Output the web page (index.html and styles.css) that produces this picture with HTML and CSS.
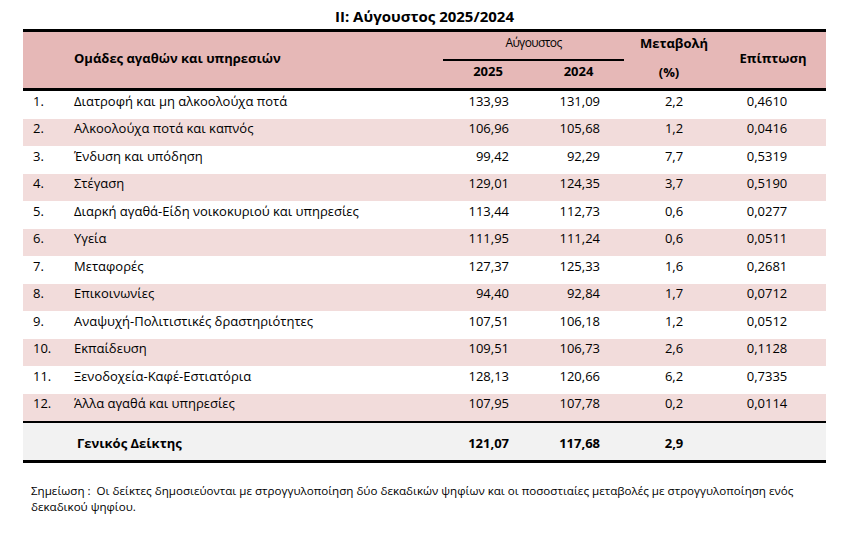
FILE: index.html
```html
<!DOCTYPE html>
<html lang="el">
<head>
    <meta charset="UTF-8">
    <meta name="viewport" content="width=device-width, initial-scale=1.0">
    <title>Αύγουστος 2025/2024</title>
    <link rel="stylesheet" href="styles.css">
</head>
<body>
    <div class="page">
        <h1 class="title">II: Αύγουστος 2025/2024</h1>

        <table class="cpi">
            <colgroup>
                <col class="c-num">
                <col class="c-label">
                <col class="c-cur">
                <col class="c-prev">
                <col class="c-change">
                <col class="c-effect">
            </colgroup>
            <thead>
                <tr class="head-top">
                    <th colspan="2" rowspan="2" class="h-group">Ομάδες αγαθών και υπηρεσιών</th>
                    <th colspan="2" class="h-month">Αύγουστος</th>
                    <th class="h-change">Μεταβολή</th>
                    <th rowspan="2" class="h-effect">Επίπτωση</th>
                </tr>
                <tr class="head-bottom">
                    <th class="h-year">2025</th>
                    <th class="h-year">2024</th>
                    <th class="h-pct">(%)</th>
                </tr>
            </thead>
            <tbody>
                <tr><td class="num">1.</td><td class="label">Διατροφή και μη αλκοολούχα ποτά</td><td class="val">133,93</td><td class="val">131,09</td><td class="chg">2,2</td><td class="eff">0,4610</td></tr>
                <tr><td class="num">2.</td><td class="label">Αλκοολούχα ποτά και καπνός</td><td class="val">106,96</td><td class="val">105,68</td><td class="chg">1,2</td><td class="eff">0,0416</td></tr>
                <tr><td class="num">3.</td><td class="label">Ένδυση και υπόδηση</td><td class="val">99,42</td><td class="val">92,29</td><td class="chg">7,7</td><td class="eff">0,5319</td></tr>
                <tr><td class="num">4.</td><td class="label">Στέγαση</td><td class="val">129,01</td><td class="val">124,35</td><td class="chg">3,7</td><td class="eff">0,5190</td></tr>
                <tr><td class="num">5.</td><td class="label">Διαρκή αγαθά-Είδη νοικοκυριού και υπηρεσίες</td><td class="val">113,44</td><td class="val">112,73</td><td class="chg">0,6</td><td class="eff">0,0277</td></tr>
                <tr><td class="num">6.</td><td class="label">Υγεία</td><td class="val">111,95</td><td class="val">111,24</td><td class="chg">0,6</td><td class="eff">0,0511</td></tr>
                <tr><td class="num">7.</td><td class="label">Μεταφορές</td><td class="val">127,37</td><td class="val">125,33</td><td class="chg">1,6</td><td class="eff">0,2681</td></tr>
                <tr><td class="num">8.</td><td class="label">Επικοινωνίες</td><td class="val">94,40</td><td class="val">92,84</td><td class="chg">1,7</td><td class="eff">0,0712</td></tr>
                <tr><td class="num">9.</td><td class="label">Αναψυχή-Πολιτιστικές δραστηριότητες</td><td class="val">107,51</td><td class="val">106,18</td><td class="chg">1,2</td><td class="eff">0,0512</td></tr>
                <tr><td class="num">10.</td><td class="label">Εκπαίδευση</td><td class="val">109,51</td><td class="val">106,73</td><td class="chg">2,6</td><td class="eff">0,1128</td></tr>
                <tr><td class="num">11.</td><td class="label">Ξενοδοχεία-Καφέ-Εστιατόρια</td><td class="val">128,13</td><td class="val">120,66</td><td class="chg">6,2</td><td class="eff">0,7335</td></tr>
                <tr><td class="num">12.</td><td class="label">Άλλα αγαθά και υπηρεσίες</td><td class="val">107,95</td><td class="val">107,78</td><td class="chg">0,2</td><td class="eff">0,0114</td></tr>
            </tbody>
            <tfoot>
                <tr>
                    <td class="num"></td>
                    <td class="label total-label">Γενικός Δείκτης</td>
                    <td class="val">121,07</td>
                    <td class="val">117,68</td>
                    <td class="chg">2,9</td>
                    <td class="eff"></td>
                </tr>
            </tfoot>
        </table>

        <p class="note">Σημείωση :&nbsp; Οι δείκτες δημοσιεύονται με στρογγυλοποίηση δύο δεκαδικών ψηφίων και οι ποσοστιαίες μεταβολές με στρογγυλοποίηση ενός δεκαδικού ψηφίου.</p>
    </div>
</body>
</html>
```

FILE: styles.css
```css
* {
    margin: 0;
    padding: 0;
    box-sizing: border-box;
}

body {
    font-family: "Open Sans", "Noto Sans", sans-serif;
    color: #000;
    background: #fff;
}

.page {
    width: 803px;
    margin-left: 23px;
}

.title {
    height: 29px;
    padding-top: 6px;
    font-size: 15px;
    line-height: 20px;
    font-weight: bold;
    text-align: center;
}

/* πίνακας */
.cpi {
    width: 803px;
    table-layout: fixed;
    border-collapse: separate;
    border-spacing: 0;
    font-size: 13px;
}

.c-num { width: 51px; }
.c-label { width: 369px; }
.c-cur { width: 90px; }
.c-prev { width: 91px; }
.c-change { width: 100px; }
.c-effect { width: 102px; }

.cpi th {
    background: #e6b8b7;
    font-weight: bold;
    line-height: 18px;
}

.head-top th {
    border-top: 3px solid #000;
    vertical-align: top;
    padding: 2px 0 7px;
}

.head-bottom th,
.cpi th.h-group,
.cpi th.h-effect {
    border-bottom: 3px solid #000;
}

.cpi th.h-group {
    text-align: left;
    vertical-align: middle;
    padding: 0 0 5px 51px;
}

.cpi th.h-effect {
    vertical-align: middle;
    padding: 0 4px 5px 0;
}

.cpi th.h-month {
    border-bottom: 2px solid #000;
    font-weight: normal;
    font-size: 12px;
    letter-spacing: -0.6px;
}

.head-bottom th {
    vertical-align: top;
    padding: 1px 0 7px;
}

.cpi th.h-pct {
    padding-top: 2px;
    padding-right: 10px;
}

.cpi td {
    line-height: 18px;
    padding: 0.5px 0 9px;
    white-space: nowrap;
}

.cpi tbody tr:nth-child(even) td {
    background: #f2dcdb;
}

.num {
    padding-left: 10px !important;
}

.val {
    text-align: right;
    padding-right: 24px !important;
}

.chg {
    text-align: center;
}

.eff {
    text-align: center;
    padding-right: 16px !important;
}

.cpi tfoot td {
    background: #f2f2f2;
    font-weight: bold;
    border-top: 2px solid #000;
    border-bottom: 3px solid #000;
    padding-top: 10.5px;
    padding-bottom: 8.5px;
}

.total-label {
    padding-left: 3px !important;
}

.note {
    margin-top: 20px;
    padding-left: 8px;
    width: 790px;
    font-size: 11.6px;
    line-height: 16px;
}
```
